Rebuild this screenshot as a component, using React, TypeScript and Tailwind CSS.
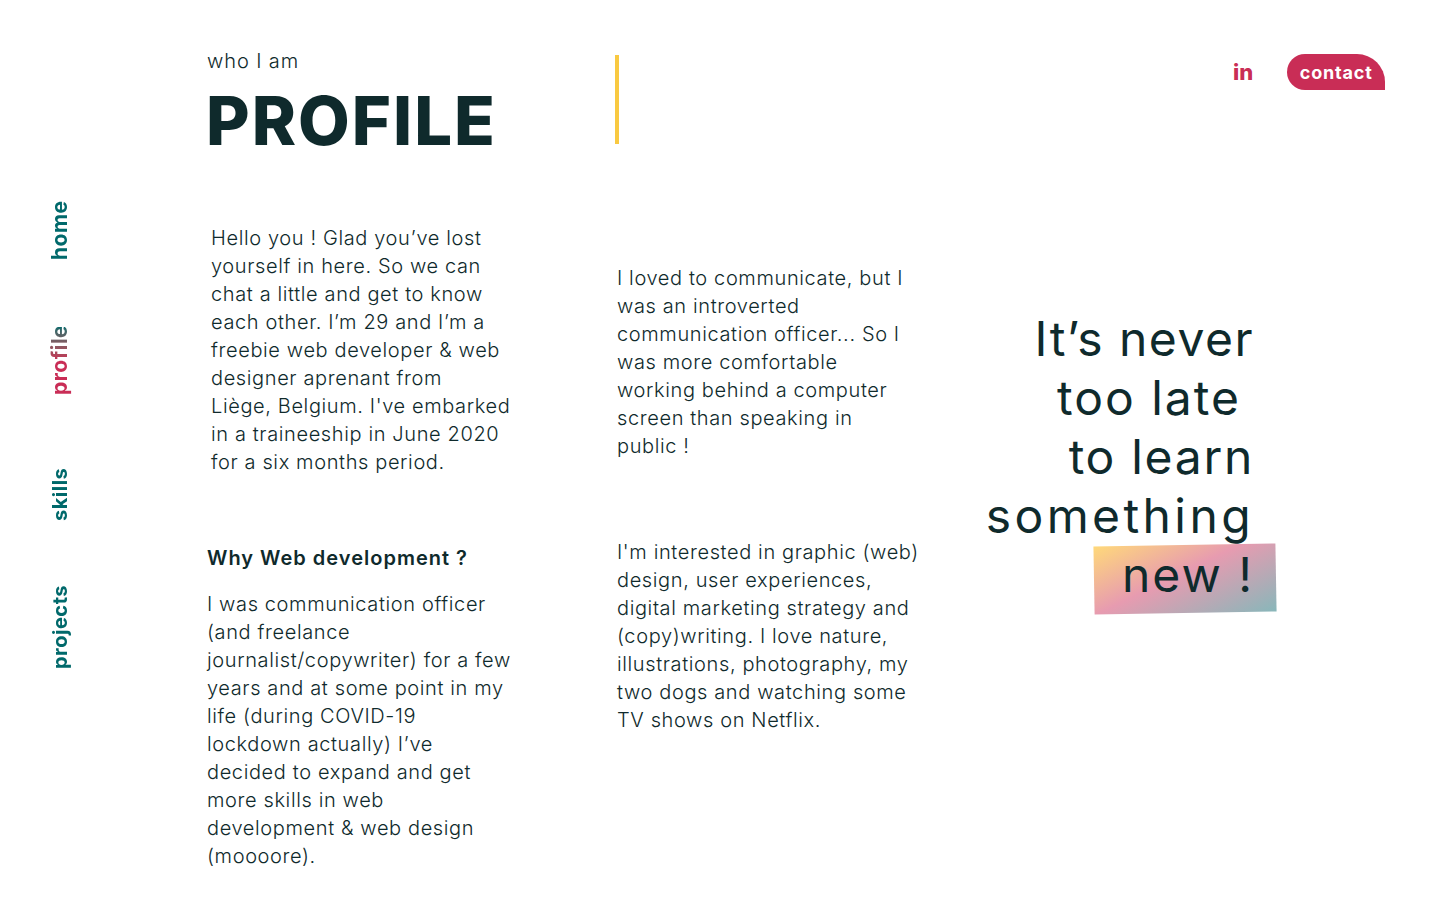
const introLines = [
  'Hello you ! Glad you’ve lost',
  'yourself in here. So we can',
  'chat a little and get to know',
  'each other. I’m 29 and I’m a',
  'freebie web developer & web',
  'designer aprenant from',
  "Liège, Belgium. I've embarked",
  'in a traineeship in June 2020',
  'for a six months period.',
];

const whyLines = [
  'I was communication officer',
  '(and freelance',
  'journalist/copywriter) for a few',
  'years and at some point in my',
  'life (during COVID-19',
  'lockdown actually) I’ve',
  'decided to expand and get',
  'more skills in web',
  'development & web design',
  '(moooore).',
];

const lovedLines = [
  'I loved to communicate, but I',
  'was an introverted',
  'communication officer... So I',
  'was more comfortable',
  'working behind a computer',
  'screen than speaking in',
  'public !',
];

const interestLines = [
  "I'm interested in graphic (web)",
  'design, user experiences,',
  'digital marketing strategy and',
  '(copy)writing. I love nature,',
  'illustrations, photography, my',
  'two dogs and watching some',
  'TV shows on Netflix.',
];

function Lines({ lines }: { lines: string[] }) {
  return (
    <p className="text-[20px] leading-[28px] font-[350] tracking-[0.62px] whitespace-nowrap">
      {lines.map(line => (
        <span key={line} className="block">{line}</span>
      ))}
    </p>
  );
}

function SideNav() {
  const label = '[writing-mode:vertical-rl] rotate-180 leading-[24px] font-bold tracking-[0.5px]';
  return (
    <nav className="w-[207px] shrink-0 flex flex-col items-start pl-[48px] pt-[200px] text-[#00696b]">
      <a className={`${label} text-[21px] h-[60px]`}>home</a>
      <a className={`${label} text-[21px] h-[68px] mt-[67px] bg-gradient-to-b from-[#c92d56] from-50% to-[#00696b] bg-clip-text text-transparent`}>profile</a>
      <a className={`${label} text-[20px] h-[52px] mt-[74px]`}>skills</a>
      <a className={`${label} text-[20px] h-[84px] mt-[64px]`}>projects</a>
    </nav>
  );
}

export default function App() {
  return (
    <div className="w-[1440px] h-[900px] overflow-hidden bg-white flex font-[Inter,sans-serif] text-[#0f2a2c]">
      <SideNav />

      <main className="flex-1 flex flex-col">
        {/* Header */}
        <header className="flex items-start pt-[46px] h-[224px]">
          <div className="w-[408px] shrink-0">
            <p className="text-[20px] leading-[30px] font-[350] tracking-[0.9px]">who I am</p>
            <h1 className="text-[67px] leading-[80px] font-extrabold tracking-[2px] -ml-[1px] mt-[5px]">PROFILE</h1>
          </div>
          <div className="w-[4px] h-[89px] mt-[9px] bg-[#f9c941]" />
          <div className="ml-[614px] flex items-center gap-[34px] mt-[8px]">
            <a className="text-[22px] leading-[36px] font-extrabold text-[#c92d56]">in</a>
            <a className="w-[98px] h-[36px] flex items-center justify-center bg-[#c92d56] text-white text-[18px] font-bold tracking-[0.8px] rounded-tl-[18px] rounded-bl-[18px] rounded-tr-[28px]">contact</a>
          </div>
        </header>

        <div className="flex">
          {/* Left column */}
          <section className="w-[410px] shrink-0">
            <div className="pl-[4px]">
              <Lines lines={introLines} />
            </div>
            <h2 className="mt-[68px] text-[20px] leading-[28px] font-semibold tracking-[1px]">Why Web development ?</h2>
            <div className="mt-[18px]">
              <Lines lines={whyLines} />
            </div>
          </section>

          {/* Middle column */}
          <section className="w-[360px] shrink-0 pt-[40px]">
            <Lines lines={lovedLines} />
            <div className="mt-[78px]">
              <Lines lines={interestLines} />
            </div>
          </section>

          {/* Quote */}
          <section className="w-[277px] shrink-0 pt-[85px] text-right text-[48px] leading-[59px] tracking-[1.5px] whitespace-nowrap">
            <p>It’s never</p>
            <p className="pr-[13px] tracking-[2px]">too late</p>
            <p className="tracking-[1.7px]">to learn</p>
            <p className="tracking-[3.4px]">something</p>
            <p className="relative tracking-[2px]">
              <span className="absolute left-[117px] top-[0px] w-[182px] h-[68px] -rotate-1 bg-[linear-gradient(155deg,#ffd97a_0%,#e79bb0_45%,#88b7ba_100%)]" />
              <span className="relative">new !</span>
            </p>
          </section>
        </div>
      </main>
    </div>
  );
}
